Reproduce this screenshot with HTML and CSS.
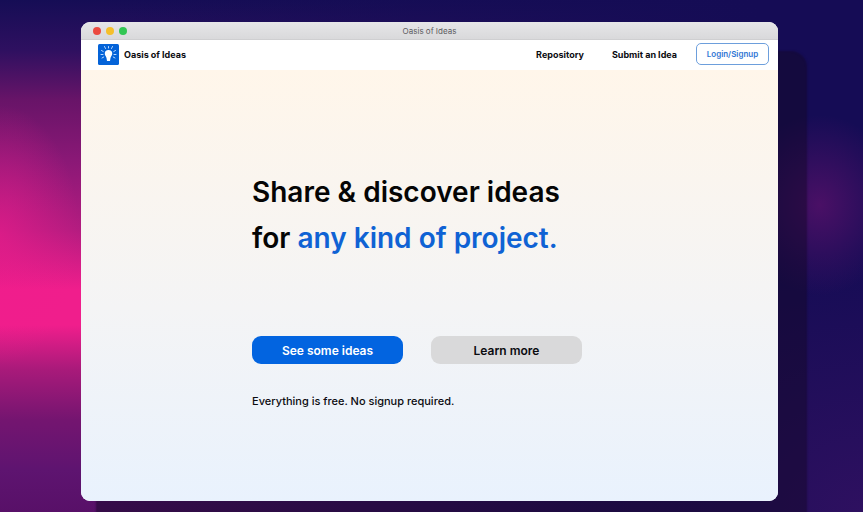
FILE: index.html
```html
<!DOCTYPE html>
<html lang="en">
   <head>
      <meta charset="UTF-8">
      <meta name="viewport" content="width=device-width, initial-scale=1.0">
      <title>Oasis of Ideas</title>
      <link rel="stylesheet" href="styles.css">
   </head>
   <body>
      <div class="window">
         <div class="titlebar">
            <div class="dots">
               <span class="dot red"></span>
               <span class="dot yellow"></span>
               <span class="dot green"></span>
            </div>
            <span class="title">Oasis of Ideas</span>
         </div>

         <header class="navbar">
            <a class="brand" href="#">
               <svg class="logo" viewBox="0 0 42 42" aria-hidden="true">
                  <rect class="logo-bg" width="42" height="42" rx="3" />
                  <path class="bulb" d="M21 12c-5 0-7.500 3-7.500 7 0 3.500 2.500 5 3.500 9l1 6h6l1-6c1-4 3.500-5.500 3.500-9 0-4-2.500-7-7.500-7z" />
                  <path class="rays" d="M21 8V5M15 9l-2-4M27 9l2-4M10.500 15L7 13M31.500 15l3.500-2M10 21H6M32 21h4M11.500 26L8 28M30.500 26l3.500 2" />
               </svg>
               Oasis of Ideas
            </a>
            <nav class="links">
               <a href="#">Repository</a>
               <a href="#">Submit an Idea</a>
               <button class="login" type="button">Login/Signup</button>
            </nav>
         </header>

         <main class="hero">
            <div class="hero-text">
               <h1>Share &amp; discover ideas<br>for <span class="accent">any kind of project.</span></h1>
               <div class="actions">
                  <button class="btn primary" type="button">See some ideas</button>
                  <button class="btn" type="button">Learn more</button>
               </div>
               <p class="note">Everything is free. No signup required.</p>
            </div>
         </main>
      </div>
   </body>
</html>
```
FILE: styles.css
```css
* {
    box-sizing: border-box;
}
body {
    display: flex;
    min-height: 100vh;
    margin: 0;
    padding: 22px 85px 11px 81px;
    overflow: hidden;
    font-family: Inter, "Liberation Sans", sans-serif;
    font-weight: 600;
    color: #0b0b10;
    /* pink glow on the left, fading to navy on the right */
    background:
        radial-gradient(ellipse 80px 130px at 0 235px, rgba(240, 28, 140, 0.6), transparent),
        radial-gradient(ellipse 80px 90px at 95% 205px, #4a1066, transparent),
        radial-gradient(ellipse 300px 260px at 100% 100%, #2e1060, transparent),
        linear-gradient(to right, transparent 10%, #150c55 88%),
        linear-gradient(#150d55 0, #2e1060 50px, #681468 100px, #8a1876 160px, #b41c80 230px, #f01e8c 290px, #f01e8c 325px, #a81a7a 370px, #741570 420px, #5e1470 470px, #581068 100%);
}
button {
    font: inherit;
    cursor: pointer;
}
a {
    color: inherit;
    text-decoration: none;
}

/* Browser window */
.window {
    display: flex;
    flex: 1;
    flex-direction: column;
    overflow: hidden;
    border-radius: 9px;
    background: #fff;
    box-shadow: 22px 36px 2px 7px rgba(20, 8, 40, 0.5);
}
.titlebar {
    display: grid;
    grid-template-columns: 1fr auto 1fr;
    align-items: center;
    height: 18px;
    padding: 0 12px;
    border-bottom: 1px solid #cfcfd1;
    background: linear-gradient(#e6e6e8, #d9d9db);
}
.dots {
    display: flex;
    gap: 5px;
}
.dot {
    width: 8px;
    height: 8px;
    border-radius: 50%;
}
.red {
    background: #ec4a40;
}
.yellow {
    background: #f5bf2a;
}
.green {
    background: #32c653;
}
.title {
    font-size: 8px;
    font-weight: 400;
    color: #5c5c60;
}

/* Navigation */
.navbar {
    display: flex;
    justify-content: space-between;
    align-items: center;
    height: 30px;
    padding: 0 9px 2px 17px;
    font-size: 9px;
    font-weight: 700;
}
.brand {
    display: flex;
    align-items: center;
    gap: 5px;
}
.logo {
    width: 21px;
    height: 21px;
}
.logo-bg {
    fill: #0463d8;
}
.bulb {
    fill: #fff;
}
.rays {
    fill: none;
    stroke: #b9d9ff;
    stroke-width: 2;
    stroke-linecap: round;
}
.links {
    display: flex;
    align-items: center;
    gap: 28px;
}
.login {
    width: 73px;
    height: 22px;
    margin-left: -9px;
    padding: 0;
    border: 1px solid #6d9fdc;
    border-radius: 5px;
    background: #fff;
    font-size: 8px;
    font-weight: 600;
    color: #2f76d4;
}

/* Hero */
.hero {
    display: flex;
    flex: 1;
    justify-content: center;
    padding-top: 99px;
    background: linear-gradient(#fff6ea, #f4f4f5 55%, #e9f2fd);
}
.hero-text {
    width: 355px;
}
h1 {
    margin: 0 0 75px;
    font-size: 28px;
    font-weight: 600;
    line-height: 46px;
    color: #050505;
}
.accent {
    color: #0f62d4;
}
.actions {
    display: flex;
    gap: 28px;
}
.btn {
    width: 151px;
    height: 28px;
    padding: 0;
    border: 0;
    border-radius: 9px;
    background: #d9d9da;
    font-size: 12px;
    color: #0b0b10;
}
.primary {
    background: #0264e0;
    color: #fff;
}
.note {
    margin: 30px 0 0;
    font-size: 11px;
    font-weight: 500;
    line-height: 14px;
}
```
